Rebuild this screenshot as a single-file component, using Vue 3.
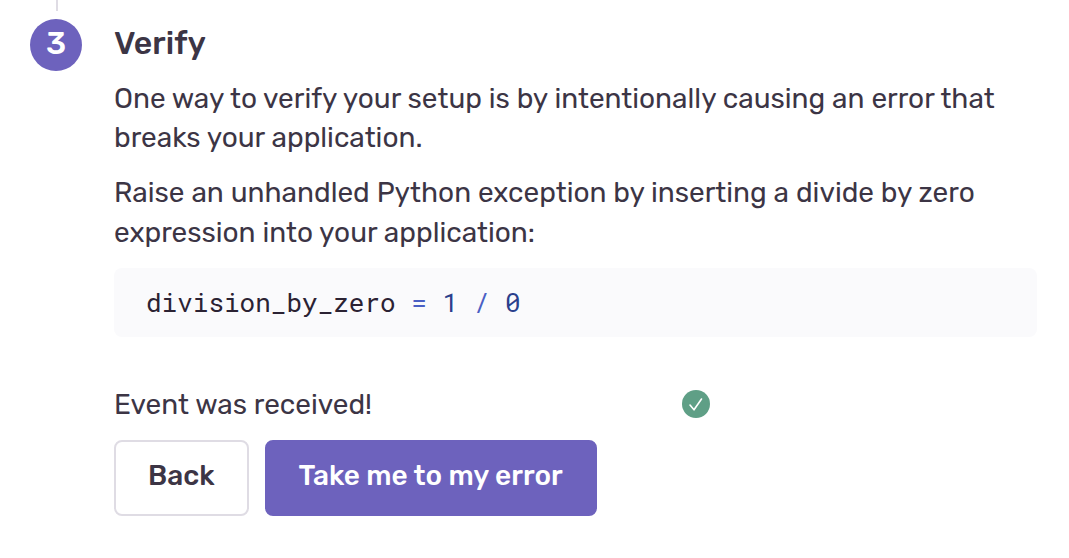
<script setup>
const tokens = [
  { text: 'division_by_zero ', kind: 'plain' },
  { text: '=', kind: 'operator' },
  { text: ' ', kind: 'plain' },
  { text: '1', kind: 'literal' },
  { text: ' ', kind: 'plain' },
  { text: '/', kind: 'operator' },
  { text: ' ', kind: 'plain' },
  { text: '0', kind: 'literal' },
]
</script>

<template>
  <main class="step">
    <div class="rail">
      <span class="connector"></span>
      <span class="number">3</span>
    </div>
    <section class="content">
      <h2>Verify</h2>
      <p>One way to verify your setup is by intentionally causing an error that breaks your application.</p>
      <p>Raise an unhandled Python exception by inserting a divide by zero expression into your application:</p>
      <pre><code><span v-for="(t, i) in tokens" :key="i" :class="t.kind">{{ t.text }}</span></code></pre>
      <div class="status" role="status">
        <span>Event was received!</span>
        <svg viewBox="0 0 28 28" width="28" height="28" aria-hidden="true">
          <circle cx="14" cy="14" r="14" fill="#5f9f86" />
          <path d="M8 15 12 19.8 19.5 9" fill="none" stroke="#fff" stroke-width="1.6" stroke-linecap="round" stroke-linejoin="round" />
        </svg>
      </div>
      <div class="actions">
        <button type="button" class="back">Back</button>
        <button type="button" class="primary">Take me to my error</button>
      </div>
    </section>
  </main>
</template>

<style>
body {
  margin: 0;
  background: #fff;
}
</style>

<style scoped>
.step {
  display: flex;
  gap: 32px;
  padding: 0 32px 0 30px;
  color: #3c3545;
  font-family: Rubik, Roboto, sans-serif;
  font-size: 28px;
  line-height: 1.4;
}
.rail {
  flex: 0 0 52px;
  display: flex;
  flex-direction: column;
}
.connector {
  box-sizing: border-box;
  align-self: flex-end;
  width: 50%;
  height: 11px;
  margin-bottom: 8px;
  border-left: 2px solid #dfdce4;
}
.number {
  width: 52px;
  height: 52px;
  border-radius: 50%;
  background: #6d62bd;
  color: #fff;
  font-size: 32px;
  line-height: 48px;
  font-weight: 500;
  text-align: center;
}
.content {
  flex: 1;
  min-width: 0;
  padding-top: 24px;
}
h2 {
  margin: 0 0 16px;
  font-size: 32px;
  line-height: 39px;
  font-weight: 500;
}
p {
  margin: 0 0 16px;
}
pre {
  margin: 0;
  padding: 16px 32px;
  border-radius: 8px;
  background: #fafafc;
  color: #2b2233;
  font-family: "Roboto Mono", "DejaVu Sans Mono", monospace;
  font-size: 26px;
  line-height: 37px;
  overflow-x: auto;
}
code {
  font: inherit;
}
.operator {
  color: #4a5fc4;
}
.literal {
  color: #2a3f8c;
}
.status {
  display: grid;
  grid-template-columns: 568px 28px;
  align-items: center;
  margin-top: 48px;
}
.actions {
  display: flex;
  gap: 16px;
  margin-top: 16px;
}
button {
  box-sizing: border-box;
  height: 76px;
  padding: 0 32px 4px;
  border: 2px solid #dfdce4;
  border-radius: 8px;
  background: #fff;
  color: inherit;
  font: inherit;
  font-weight: 500;
}
.primary {
  border-color: #6d62bd;
  background: #6d62bd;
  color: #fff;
}
</style>
